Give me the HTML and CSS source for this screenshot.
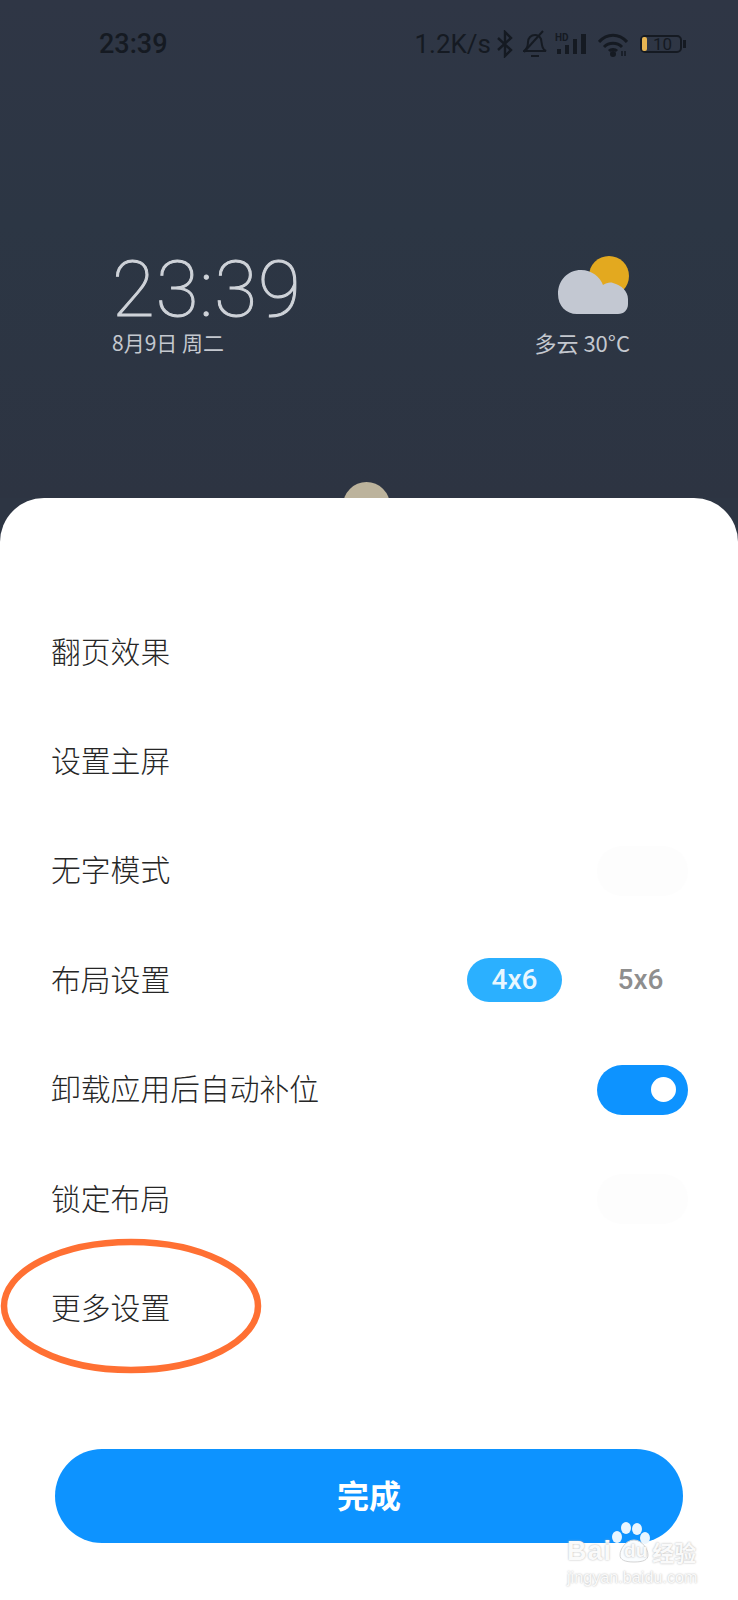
FILE: index.html
```html
<!DOCTYPE html>
<html lang="zh">
<head>
  <meta charset="utf-8">
  <title>桌面设置</title>
  <link rel="stylesheet" href="styles.css">
</head>
<body>
  <div class="wallpaper">
    <div class="status_bar">
      <span class="status_time">23:39</span>
      <div class="status_right">
        <span class="net_speed">1.2K/s</span>
        <svg class="ic_bt" width="16" height="28" viewBox="0 0 16 28" fill="none" stroke="#151a22" stroke-width="2.400"><path d="M1 8l13 12-6 6V2l6 6L1 20"/></svg>
        <svg class="ic_bell" width="24" height="28" viewBox="0 0 24 28" fill="none" stroke="#151a22" stroke-width="2"><path d="M1 21c3-2 4-4 4-9 0-4 3-7 7-7 3 0 5 2 6 4 1 6 1 10 5 12z"/><path d="M8 26h8"/><path d="M1 22L20 1"/></svg>
        <svg class="ic_signal" width="34" height="28" viewBox="0 0 34 28" fill="#151a22"><rect x="2" y="19" width="4" height="5"/><rect x="10" y="15" width="4" height="9"/><rect x="18" y="9" width="4" height="15"/><rect x="26" y="4" width="5" height="20"/><text x="0" y="11" class="hd_text">HD</text></svg>
        <svg class="ic_wifi" width="30" height="28" viewBox="0 0 30 28" fill="none" stroke="#151a22" stroke-width="3"><path d="M1 12C9 3 21 3 29 12"/><path d="M6 17c5-5 13-5 18 0"/><path d="M11 21c2-2 6-2 8 0"/><circle cx="15" cy="24" r="1.500" fill="#151a22"/><path class="wifi_arrows" d="M24 21v5M27 21v5"/></svg>
        <div class="battery">
          <span class="battery_level"></span>
          <span class="battery_text">10</span>
          <span class="battery_cap"></span>
        </div>
      </div>
    </div>
    <div class="widgets">
      <div class="clock">
        <div class="clock_time">23:39</div>
        <div class="clock_date">8月9日 周二</div>
      </div>
      <div class="weather">
        <svg class="weather_icon" width="73" height="64" viewBox="0 0 73 64">
          <circle cx="52" cy="22" r="20" fill="#e3a91f"/>
          <path d="M20 60C9 60 1 52 1 40 1 26 11 16 24 16c11 0 19 7 22 15 3-2 7-3 10-2 8 2 15 8 15 16v5c0 6-4 10-10 10z" fill="#c3c8d2"/>
        </svg>
        <div class="weather_text">多云 30°C</div>
      </div>
    </div>
    <div class="peek_dot"></div>
  </div>

  <div class="sheet">
    <div class="row">翻页效果</div>
    <div class="row">设置主屏</div>
    <div class="row">无字模式 <span class="toggle ghost"></span></div>
    <div class="row">布局设置
      <div class="layout_switch">
        <span class="seg active">4x6</span>
        <span class="seg">5x6</span>
      </div>
    </div>
    <div class="row">卸载应用后自动补位 <span class="toggle on"><i class="knob"></i></span></div>
    <div class="row">锁定布局 <span class="toggle ghost"></span></div>
    <div class="row">更多设置</div>
    <div class="done_btn">完成</div>
  </div>

  <svg class="circle_mark" width="262" height="136" viewBox="0 0 262 136" fill="none">
    <ellipse cx="131" cy="68" rx="127" ry="64" stroke="#ff7033" stroke-width="6.500"/>
  </svg>

  <div class="watermark">
    <svg class="paw" width="42" height="42" viewBox="0 0 42 42">
      <g fill="#eaf6ff">
        <ellipse cx="7" cy="16" rx="5" ry="6"/>
        <ellipse cx="16" cy="7" rx="5" ry="6"/>
        <ellipse cx="27" cy="8" rx="5" ry="6"/>
        <ellipse cx="35" cy="17" rx="5" ry="6"/>
      </g>
      <path d="M24 19c-8 0-14 9-14 15 0 5 5 7 14 7s14-2 14-7c0-6-6-15-14-15z" fill="#fafdff" stroke="#d4d4d4"/>
    </svg>
    <div class="wm_line"><span class="wm_bai">Bai</span><span class="wm_du">du</span><span class="wm_cn">经验</span></div>
    <div class="wm_url">jingyan.baidu.com</div>
  </div>
</body>
</html>
```

FILE: styles.css
```css
body, html {
  margin: 0;
  height: 100%;
}
body {
  position: relative;
  width: 738px;
  height: 1600px;
  overflow: hidden;
  background-color: #2d3543;
  font-family: "Noto Sans CJK SC", "Noto Sans", sans-serif;
}
.wallpaper {
  position: relative;
  height: 498px;
  background: linear-gradient(180deg, #2f3645 0%, #2c3644 45%, #2d3442 100%);
}

/* status bar */
.status_bar {
  display: flex;
  justify-content: space-between;
  align-items: center;
  height: 88px;
  padding: 0 52px 0 99px;
  color: #151a22;
}
.status_time {
  font-family: Roboto, sans-serif;
  font-size: 27px;
  font-weight: 500;
}
.status_right {
  display: flex;
  align-items: center;
}
.net_speed {
  font-family: Roboto, sans-serif;
  font-size: 26px;
  margin-right: 6px;
}
.ic_bell {
  margin-left: 10px;
}
.ic_signal {
  margin-left: 8px;
}
.ic_wifi {
  margin-left: 9px;
}
.wifi_arrows {
  stroke-width: 1.500;
}
.hd_text {
  font-family: Roboto, sans-serif;
  font-size: 10px;
  font-weight: 700;
}
.battery {
  position: relative;
  display: flex;
  align-items: center;
  box-sizing: border-box;
  width: 42px;
  height: 18px;
  margin-left: 12px;
  margin-right: 4px;
  border: 2px solid #151a22;
  border-radius: 5px;
}
.battery_level {
  width: 5px;
  height: 14px;
  border-radius: 2px;
  background-color: #e8b552;
}
.battery_text {
  margin-left: 6px;
  font-family: Roboto, sans-serif;
  font-size: 17px;
  line-height: 14px;
}
.battery_cap {
  position: absolute;
  right: -6px;
  width: 3px;
  height: 8px;
  background-color: #151a22;
}

/* clock and weather */
.widgets {
  display: flex;
  justify-content: space-between;
  padding: 166px 108px 0 112px;
}
.clock_time {
  font-family: Roboto, sans-serif;
  font-size: 78px;
  font-weight: 100;
  line-height: 72px;
  letter-spacing: 1px;
  color: #cfd3d9;
  -webkit-text-stroke: 1px #cfd3d9;
}
.clock_date {
  margin-top: 1px;
  font-size: 21px;
  line-height: 30px;
  color: #c4c8cf;
}
.weather {
  display: flex;
  flex-direction: column;
  align-items: flex-end;
}
.weather_text {
  margin-top: 9px;
  font-size: 22px;
  line-height: 30px;
  color: #c4c8cf;
}
.peek_dot {
  position: absolute;
  left: 343px;
  top: 482px;
  width: 47px;
  height: 47px;
  border-radius: 50%;
  background-color: #bcb39c;
}

/* settings sheet */
.sheet {
  position: absolute;
  left: 0;
  right: 0;
  top: 498px;
  bottom: 0;
  padding-top: 98px;
  background-color: #fff;
  border-radius: 44px 44px 0 0;
}
.row {
  display: flex;
  justify-content: space-between;
  align-items: center;
  box-sizing: border-box;
  height: 109.400px;
  padding: 0 50px 2px 51px;
  font-size: 29.800px;
  font-weight: 300;
  color: #262626;
}
.toggle {
  display: flex;
  align-items: center;
  justify-content: flex-end;
  width: 91px;
  height: 50px;
  margin-top: 5px;
  border-radius: 25px;
}
.toggle.ghost {
  background-color: #fdfdfd;
}
.toggle.on {
  background-color: #0d93ff;
}
.knob {
  width: 25px;
  height: 25px;
  margin-right: 12px;
  border-radius: 50%;
  background-color: #fff;
}
.layout_switch {
  display: flex;
  gap: 31px;
  margin-top: 5px;
}
.seg {
  width: 95px;
  height: 44px;
  border-radius: 22px;
  font-family: Roboto, sans-serif;
  font-size: 28px;
  font-weight: 500;
  line-height: 44px;
  text-align: center;
  color: #8e8e8e;
}
.seg.active {
  background-color: #2bb0ff;
  color: #e9f7ff;
}
.done_btn {
  margin: 87px 55px 0;
  height: 94px;
  border-radius: 47px;
  background-color: #0d93ff;
  color: #fff;
  font-size: 32px;
  font-weight: 700;
  line-height: 90px;
  text-align: center;
}

/* hand drawn mark over the last row */
.circle_mark {
  position: absolute;
  left: 0;
  top: 1238px;
}

/* site watermark */
.watermark {
  position: absolute;
  left: 567px;
  top: 1521px;
  width: 140px;
  color: #fafafa;
  text-shadow: 0 0 2px #b0b0b0;
}
.paw {
  position: absolute;
  left: 43px;
  top: 0;
}
.wm_line {
  position: relative;
  display: flex;
  align-items: center;
  padding-top: 17px;
  font-family: "Liberation Sans", sans-serif;
  font-size: 27px;
  line-height: 26px;
  font-weight: 700;
}
.wm_bai {
  letter-spacing: 1px;
}
.wm_du {
  margin-left: 12px;
  font-size: 19px;
}
.wm_cn {
  margin-left: 5px;
  font-family: "Noto Sans CJK SC", sans-serif;
  font-size: 22px;
}
.wm_url {
  margin-top: 3px;
  font-family: "Liberation Sans", sans-serif;
  font-size: 16.200px;
  line-height: 20px;
  white-space: nowrap;
}
```
